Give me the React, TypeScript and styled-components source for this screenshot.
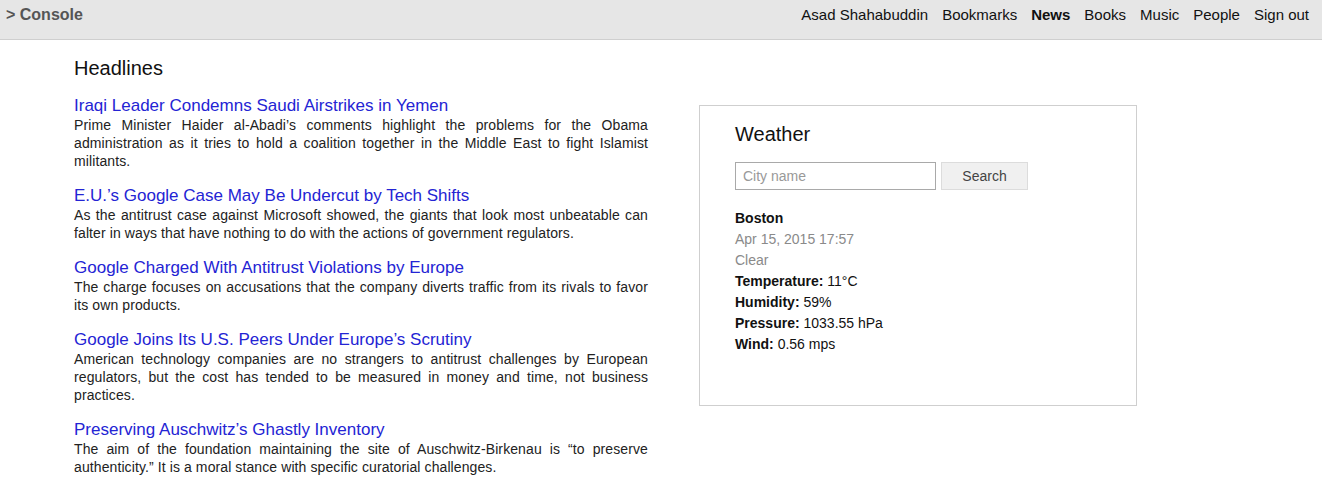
import React from "react";
import styled, { createGlobalStyle } from "styled-components";

const Global = createGlobalStyle`
  html, body { margin: 0; padding: 0; background: #fff; }
  body { font-family: "Liberation Sans", Arial, sans-serif; color: #222; }
  * { box-sizing: border-box; }
`;

const Header = styled.header`
  height: 40px;
  background: #e6e6e6;
  border-bottom: 1px solid #cfcfcf;
  display: flex;
  align-items: flex-start;
  justify-content: space-between;
  padding: 0 13px 0 6px;
`;

const Brand = styled.div`
  font-size: 16px;
  line-height: 18px;
  font-weight: bold;
  color: #555;
  margin-top: 6px;
`;

const Nav = styled.nav`
  display: flex;
  gap: 14px;
  margin-top: 6px;
`;

const NavLink = styled.a<{ $active?: boolean }>`
  font-size: 15px;
  line-height: 18px;
  color: #111;
  text-decoration: none;
  font-weight: ${(p) => (p.$active ? "bold" : "normal")};
`;

const Main = styled.main`
  display: flex;
  align-items: flex-start;
  gap: 51px;
  padding: 16px 0 0 74px;
`;

const Column = styled.section`
  width: 574px;
`;

const Heading = styled.h1`
  margin: 0 0 16px;
  font-size: 20px;
  font-weight: normal;
  line-height: 24px;
  color: #111;
`;

const Article = styled.article`
  margin-bottom: 16px;
`;

const Title = styled.a`
  display: block;
  font-size: 17px;
  line-height: 20px;
  color: #2424d4;
  text-decoration: none;
`;

const Summary = styled.p`
  margin: 0;
  font-size: 14px;
  line-height: 18px;
  letter-spacing: 0.1px;
  text-align: justify;
  color: #222;
`;

const WeatherBox = styled.aside`
  width: 438px;
  height: 301px;
  margin-top: 49px;
  border: 1px solid #cfcfcf;
  padding: 16px 35px 0;
`;

const WeatherTitle = styled.h2`
  margin: 0 0 16px;
  font-size: 20px;
  font-weight: normal;
  line-height: 24px;
  color: #111;
`;

const SearchRow = styled.div`
  display: flex;
  gap: 5px;
  margin-bottom: 18px;
`;

const CityInput = styled.input`
  width: 201px;
  height: 28px;
  border: 1px solid #a9a9a9;
  padding: 0 7px;
  font-family: "Liberation Sans", Arial, sans-serif;
  font-size: 14px;
  color: #333;
  outline: none;
  &::placeholder { color: #999; }
`;

const SearchButton = styled.button`
  width: 87px;
  height: 28px;
  background: #f0f0f0;
  border: 1px solid #dcdcdc;
  font-family: "Liberation Sans", Arial, sans-serif;
  font-size: 14px;
  color: #444;
`;

const Line = styled.div<{ $muted?: boolean }>`
  font-size: 14px;
  line-height: 21px;
  color: ${(p) => (p.$muted ? "#8a8a8a" : "#111")};
  b { font-weight: bold; }
`;

const articles = [
  {
    title: "Iraqi Leader Condemns Saudi Airstrikes in Yemen",
    body: "Prime Minister Haider al-Abadi’s comments highlight the problems for the Obama administration as it tries to hold a coalition together in the Middle East to fight Islamist militants.",
  },
  {
    title: "E.U.’s Google Case May Be Undercut by Tech Shifts",
    body: "As the antitrust case against Microsoft showed, the giants that look most unbeatable can falter in ways that have nothing to do with the actions of government regulators.",
  },
  {
    title: "Google Charged With Antitrust Violations by Europe",
    body: "The charge focuses on accusations that the company diverts traffic from its rivals to favor its own products.",
  },
  {
    title: "Google Joins Its U.S. Peers Under Europe’s Scrutiny",
    body: "American technology companies are no strangers to antitrust challenges by European regulators, but the cost has tended to be measured in money and time, not business practices.",
  },
  {
    title: "Preserving Auschwitz’s Ghastly Inventory",
    body: "The aim of the foundation maintaining the site of Auschwitz-Birkenau is “to preserve authenticity.” It is a moral stance with specific curatorial challenges.",
  },
];

const navItems = ["Asad Shahabuddin", "Bookmarks", "News", "Books", "Music", "People", "Sign out"];

export default function App() {
  return (
    <>
      <Global />
      <Header>
        <Brand>&gt; Console</Brand>
        <Nav>
          {navItems.map((n) => (
            <NavLink key={n} href="#" $active={n === "News"}>
              {n}
            </NavLink>
          ))}
        </Nav>
      </Header>
      <Main>
        <Column>
          <Heading>Headlines</Heading>
          {articles.map((a) => (
            <Article key={a.title}>
              <Title href="#">{a.title}</Title>
              <Summary>{a.body}</Summary>
            </Article>
          ))}
        </Column>
        <WeatherBox>
          <WeatherTitle>Weather</WeatherTitle>
          <SearchRow>
            <CityInput placeholder="City name" />
            <SearchButton>Search</SearchButton>
          </SearchRow>
          <Line><b>Boston</b></Line>
          <Line $muted>Apr 15, 2015 17:57</Line>
          <Line $muted>Clear</Line>
          <Line><b>Temperature:</b> 11°C</Line>
          <Line><b>Humidity:</b> 59%</Line>
          <Line><b>Pressure:</b> 1033.55 hPa</Line>
          <Line><b>Wind:</b> 0.56 mps</Line>
        </WeatherBox>
      </Main>
    </>
  );
}
